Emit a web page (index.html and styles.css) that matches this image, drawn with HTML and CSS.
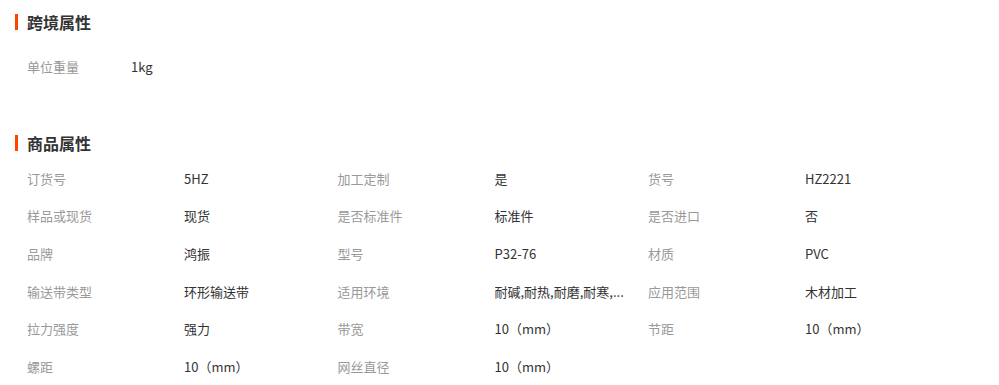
FILE: index.html
```html
<!DOCTYPE html>
<html lang="zh-CN">
<head>
<meta charset="utf-8">
<title>属性</title>
<link rel="stylesheet" href="styles.css">
</head>
<body>
<div class="page">
  <section class="section section-cross">
    <h2 class="title">跨境属性</h2>
    <div class="cross-list">
      <div class="cross-row">
        <span class="label cross-label">单位重量</span>
        <span class="value">1kg</span>
      </div>
    </div>
  </section>
  <section class="section section-goods">
    <h2 class="title">商品属性</h2>
    <div class="attr-grid">
      <span class="label">订货号</span><span class="value">5HZ</span>
      <span class="label">加工定制</span><span class="value">是</span>
      <span class="label">货号</span><span class="value">HZ2221</span>

      <span class="label">样品或现货</span><span class="value">现货</span>
      <span class="label">是否标准件</span><span class="value">标准件</span>
      <span class="label">是否进口</span><span class="value">否</span>

      <span class="label">品牌</span><span class="value">鸿振</span>
      <span class="label">型号</span><span class="value">P32-76</span>
      <span class="label">材质</span><span class="value">PVC</span>

      <span class="label">输送带类型</span><span class="value">环形输送带</span>
      <span class="label">适用环境</span><span class="value">耐碱,耐热,耐磨,耐寒,...</span>
      <span class="label">应用范围</span><span class="value">木材加工</span>

      <span class="label">拉力强度</span><span class="value">强力</span>
      <span class="label">带宽</span><span class="value">10（mm）</span>
      <span class="label">节距</span><span class="value">10（mm）</span>

      <span class="label">螺距</span><span class="value">10（mm）</span>
      <span class="label">网丝直径</span><span class="value">10（mm）</span>
    </div>
  </section>
</div>
</body>
</html>
```

FILE: styles.css
```css
* {
  box-sizing: border-box;
}

html, body {
  margin: 0;
  padding: 0;
  background: #ffffff;
}

body {
  font-family: "Noto Sans CJK SC", "Noto Sans", sans-serif;
  font-size: 13px;
  color: #333333;
  overflow: hidden;
}

.page {
  padding: 14px 0 0 15px;
}

.title {
  margin: 0;
  height: 16px;
  line-height: 16px;
  font-size: 16px;
  font-weight: bold;
  color: #333333;
  border-left: 3px solid #ff4400;
  padding-left: 9px;
}

.cross-list {
  margin-top: 18px;
  padding-left: 12px;
}

.cross-row {
  display: flex;
  align-items: center;
  height: 37.6px;
}

.cross-label {
  width: 104px;
}

.section-goods {
  margin-top: 49px;
}

.attr-grid {
  margin-top: 9px;
  padding-left: 12px;
  display: grid;
  grid-template-columns: repeat(3, 157px 153.5px);
  grid-auto-rows: 37.6px;
  align-items: center;
}

.label {
  color: #999999;
  white-space: nowrap;
}

.value {
  color: #333333;
  white-space: nowrap;
  overflow: hidden;
  text-overflow: ellipsis;
  max-width: 140px;
}
```
